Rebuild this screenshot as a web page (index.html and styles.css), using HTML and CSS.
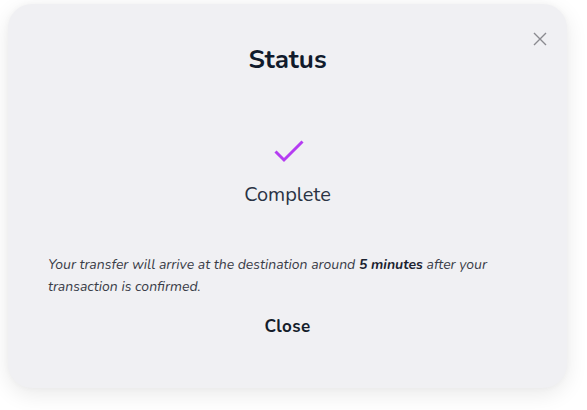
FILE: index.html
```html
<!DOCTYPE html>
<html>
<head>
<meta charset="utf-8">
<link rel="stylesheet" href="styles.css">
</head>
<body>
<div class="modal">
  <button class="close-x" aria-label="Close">
    <svg width="14" height="14" viewBox="0 0 14 14"><path d="M1 1L13 13M13 1L1 13" stroke="#8a8a90" stroke-width="1.4" fill="none"/></svg>
  </button>
  <h1 class="title">Status</h1>
  <div class="status">
    <svg class="check" width="30" height="23" viewBox="0 0 30 23"><path d="M1.5 11.5L10 20L28.5 1.5" stroke="#b53cf2" stroke-width="3" fill="none"/></svg>
    <div class="status-text">Complete</div>
  </div>
  <p class="note">Your transfer will arrive at the destination around <b>5 minutes</b> after your transaction is confirmed.</p>
  <div class="actions"><span class="close-btn">Close</span></div>
</div>
</body>
</html>
```
FILE: styles.css
```css
html, body {
  margin: 0;
  padding: 0;
  background: #ffffff;
}
body {
  font-family: "Nunito", "Lato", "Noto Sans", sans-serif;
  padding: 4px 20px 22px 8px;
}
.modal {
  position: relative;
  box-sizing: border-box;
  width: 559px;
  height: 384px;
  background: #f0f0f3;
  border-radius: 24px;
  box-shadow: 0 6px 22px rgba(0, 0, 0, 0.09), 0 0 6px rgba(0,0,0,0.03);
  padding: 0 40px;
  display: flex;
  flex-direction: column;
  align-items: center;
}
.close-x {
  position: absolute;
  top: 28px;
  right: 20px;
  background: none;
  border: 0;
  padding: 0;
  width: 14px;
  height: 14px;
  cursor: pointer;
}
.close-x svg { display: block; }
.title {
  margin: 40px 0 0;
  font-size: 26px;
  line-height: 32px;
  font-weight: 700;
  color: #111b2c;
}
.status {
  margin-top: 64px;
  display: flex;
  flex-direction: column;
  align-items: center;
}
.check { display: block; margin-left: 2px; }
.status-text {
  margin-top: 20px;
  font-size: 20px;
  line-height: 24px;
  color: #2a3344;
}
.note {
  align-self: stretch;
  margin: 47px 0 0;
  font-size: 14px;
  line-height: 22px;
  font-style: italic;
  color: #3a3d48;
}
.note b { font-weight: 700; color: #1b2230; }
.actions {
  margin-top: 18px;
}
.close-btn {
  font-size: 17px;
  letter-spacing: 0.4px;
  line-height: 22px;
  font-weight: 700;
  color: #151d2b;
}
```
